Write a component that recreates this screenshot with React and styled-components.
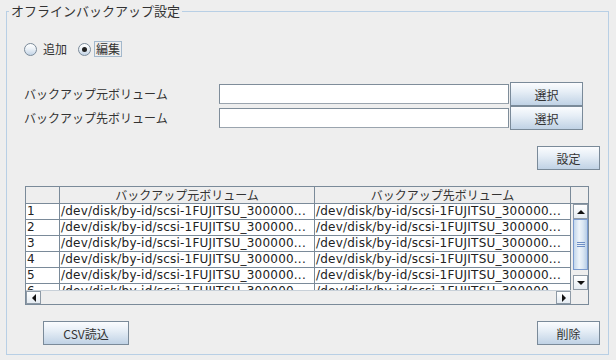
import React, { useState } from "react";
import styled, { createGlobalStyle } from "styled-components";

const GlobalStyle = createGlobalStyle`
  html, body {
    margin: 0;
    padding: 0;
    background: #eeeeee;
  }
  body {
    width: 616px;
    height: 360px;
    overflow: hidden;
    font-family: "Noto Sans CJK JP", "DejaVu Sans", sans-serif;
    color: #333333;
  }
`;

//! Panel

const Panel = styled.fieldset`
  margin: 3px 7px 0 6px;
  padding: 0 8px 9px 17px;
  border: 1px solid #b8cfe5;
  min-width: 0;
`;

const Legend = styled.legend`
  margin-left: -15px;
  padding: 0 2px;
  font-size: 13px;
  line-height: 16px;
  color: #333333;
`;

//! Radio

const RadioRow = styled.div`
  display: flex;
  align-items: center;
  height: 16px;
  margin-top: 22px;
  gap: 9px;
`;

const RadioOption = styled.label`
  display: flex;
  align-items: center;
  gap: ${(p) => (p.$focus ? "3px" : "4px")};
  font-size: 12px;
  cursor: pointer;
`;

const RadioCircle = styled.span`
  width: 13px;
  height: 13px;
  box-sizing: border-box;
  border-radius: 50%;
  border: 1px solid #7a8a99;
  background: linear-gradient(to bottom, #ffffff 0%, #eef3f8 40%, #c3d4e6 100%);
  display: flex;
  align-items: center;
  justify-content: center;
  &::after {
    content: "";
    width: 5px;
    height: 5px;
    border-radius: 50%;
    background: #222;
    display: ${(p) => (p.$checked ? "block" : "none")};
  }
`;

const RadioText = styled.span`
  line-height: 14px;
  padding: 0 1px;
  border: 1px solid ${(p) => (p.$focus ? "#a3b8cc" : "transparent")};
`;

//! Form

const FormGrid = styled.div`
  display: grid;
  grid-template-columns: 195px 291px 73px;
  grid-auto-rows: 24px;
  align-items: center;
  margin-top: 25px;
  font-size: 12px;
`;

const FieldLabel = styled.span`
  line-height: 16px;
`;

const Input = styled.input`
  box-sizing: border-box;
  width: 290px;
  height: 20px;
  margin: 0;
  padding: 0 3px;
  border: 1px solid #7f8d9a;
  border-bottom-color: #9aa4ae;
  background: #ffffff;
  font-size: 12px;
  outline: none;
`;

const Button = styled.button`
  box-sizing: border-box;
  width: ${(p) => p.$w}px;
  height: 24px;
  margin: 0;
  padding: 0;
  border: 1px solid #7a8a99;
  border-radius: 0;
  background: linear-gradient(to bottom, #fbfcfe 0%, #e6eef6 40%, #c0d2e5 100%);
  font-family: "Noto Sans CJK JP", sans-serif;
  font-size: 12px;
  color: #333333;
  cursor: pointer;
`;

const SetRow = styled.div`
  display: flex;
  justify-content: flex-end;
  margin-top: 16px;
`;

//! Table

const Pane = styled.div`
  box-sizing: border-box;
  height: 119px;
  margin: 16px 11px 0 1px;
  border: 1px solid #7a8a99;
  display: grid;
  grid-template-columns: 1fr 17px;
  grid-template-rows: 17px 86px 14px;
  background: #eeeeee;
`;

const cols = "34px 255px 256px";

const HeaderRow = styled.div`
  display: grid;
  grid-template-columns: ${cols};
  border-bottom: 1px solid #7a8a99;
`;

const HeaderCell = styled.div`
  border-right: 1px solid #7a8a99;
  font-size: 12px;
  line-height: 16px;
  text-align: center;
  color: #333333;
  overflow: hidden;
  white-space: nowrap;
`;

const Corner = styled.div`
  border-bottom: 1px solid #7a8a99;
`;

const Body = styled.div`
  overflow: hidden;
  background: #eeeeee;
`;

const Row = styled.div`
  display: grid;
  grid-template-columns: ${cols};
  height: 16px;
  box-sizing: border-box;
  border-bottom: 1px solid #7a8a99;
  background: #ffffff;
`;

const Cell = styled.div`
  border-right: 1px solid #7a8a99;
  padding-left: 1px;
  font-family: "DejaVu Sans", sans-serif;
  font-size: 12px;
  letter-spacing: 0.22px;
  line-height: 15px;
  color: #222222;
  overflow: hidden;
  white-space: nowrap;
`;

const VScroll = styled.div`
  display: flex;
  flex-direction: column;
  padding-left: 2px;
  background: #eeeeee;
`;

const HScroll = styled.div`
  display: flex;
  border-top: 1px solid #c8d0d8;
  background: #eeeeee;
`;

const ArrowButton = styled.div`
  box-sizing: border-box;
  width: 15px;
  height: ${(p) => (p.$vertical ? "15px" : "13px")};
  flex: none;
  border: 1px solid #8e9aa6;
  background: linear-gradient(to bottom, #ffffff, #e4ebf2);
  display: flex;
  align-items: center;
  justify-content: center;
  &::after {
    content: "";
    width: 0;
    height: 0;
    border-style: solid;
    ${(p) =>
      p.$dir === "up"
        ? "border-width: 0 4px 4px 4px; border-color: transparent transparent #111 transparent;"
        : p.$dir === "down"
        ? "border-width: 4px 4px 0 4px; border-color: #111 transparent transparent transparent;"
        : p.$dir === "left"
        ? "border-width: 4px 4px 4px 0; border-color: transparent #111 transparent transparent;"
        : "border-width: 4px 0 4px 4px; border-color: transparent transparent transparent #111;"}
  }
`;

const Track = styled.div`
  flex: 1;
`;

const Thumb = styled.div`
  box-sizing: border-box;
  height: 51px;
  border: 1px solid #7b9bcf;
  background: linear-gradient(to right, #c2d6ec 0%, #eef4fa 40%, #dae6f3 70%, #b7cde6 100%);
  display: flex;
  flex-direction: column;
  align-items: center;
  justify-content: center;
  gap: 1px;
`;

const Grip = styled.span`
  width: 8px;
  height: 1px;
  background: #6e8fc6;
`;

//! Bottom

const BottomRow = styled.div`
  display: flex;
  justify-content: space-between;
  margin-top: 16px;
  padding-left: 19px;
`;

const path = "/dev/disk/by-id/scsi-1FUJITSU_300000...";
const rows = [1, 2, 3, 4, 5, 6].map((n) => ({ n, src: path, dst: path }));

export default function App() {
  const [mode, setMode] = useState("edit");

  return (
    <>
      <GlobalStyle />
      <Panel>
        <Legend>オフラインバックアップ設定</Legend>
        <RadioRow>
          <RadioOption onClick={() => setMode("add")}>
            <RadioCircle $checked={mode === "add"} />
            <RadioText $focus={mode === "add"}>追加</RadioText>
          </RadioOption>
          <RadioOption $focus onClick={() => setMode("edit")}>
            <RadioCircle $checked={mode === "edit"} />
            <RadioText $focus={mode === "edit"}>編集</RadioText>
          </RadioOption>
        </RadioRow>

        <FormGrid>
          <FieldLabel>バックアップ元ボリューム</FieldLabel>
          <Input />
          <Button $w={73}>選択</Button>
          <FieldLabel>バックアップ先ボリューム</FieldLabel>
          <Input />
          <Button $w={73}>選択</Button>
        </FormGrid>

        <SetRow>
          <Button $w={63}>設定</Button>
        </SetRow>

        <Pane>
          <HeaderRow>
            <HeaderCell />
            <HeaderCell>バックアップ元ボリューム</HeaderCell>
            <HeaderCell>バックアップ先ボリューム</HeaderCell>
          </HeaderRow>
          <Corner />
          <Body>
            {rows.map((r) => (
              <Row key={r.n}>
                <Cell>{r.n}</Cell>
                <Cell>{r.src}</Cell>
                <Cell>{r.dst}</Cell>
              </Row>
            ))}
          </Body>
          <VScroll>
            <ArrowButton $vertical $dir="up" />
            <Thumb>
              <Grip />
              <Grip />
              <Grip />
            </Thumb>
            <Track />
            <ArrowButton $vertical $dir="down" />
          </VScroll>
          <HScroll>
            <ArrowButton $dir="left" />
            <Track />
            <ArrowButton $dir="right" />
          </HScroll>
          <div />
        </Pane>

        <BottomRow>
          <Button $w={86}>CSV読込</Button>
          <Button $w={63}>削除</Button>
        </BottomRow>
      </Panel>
    </>
  );
}
